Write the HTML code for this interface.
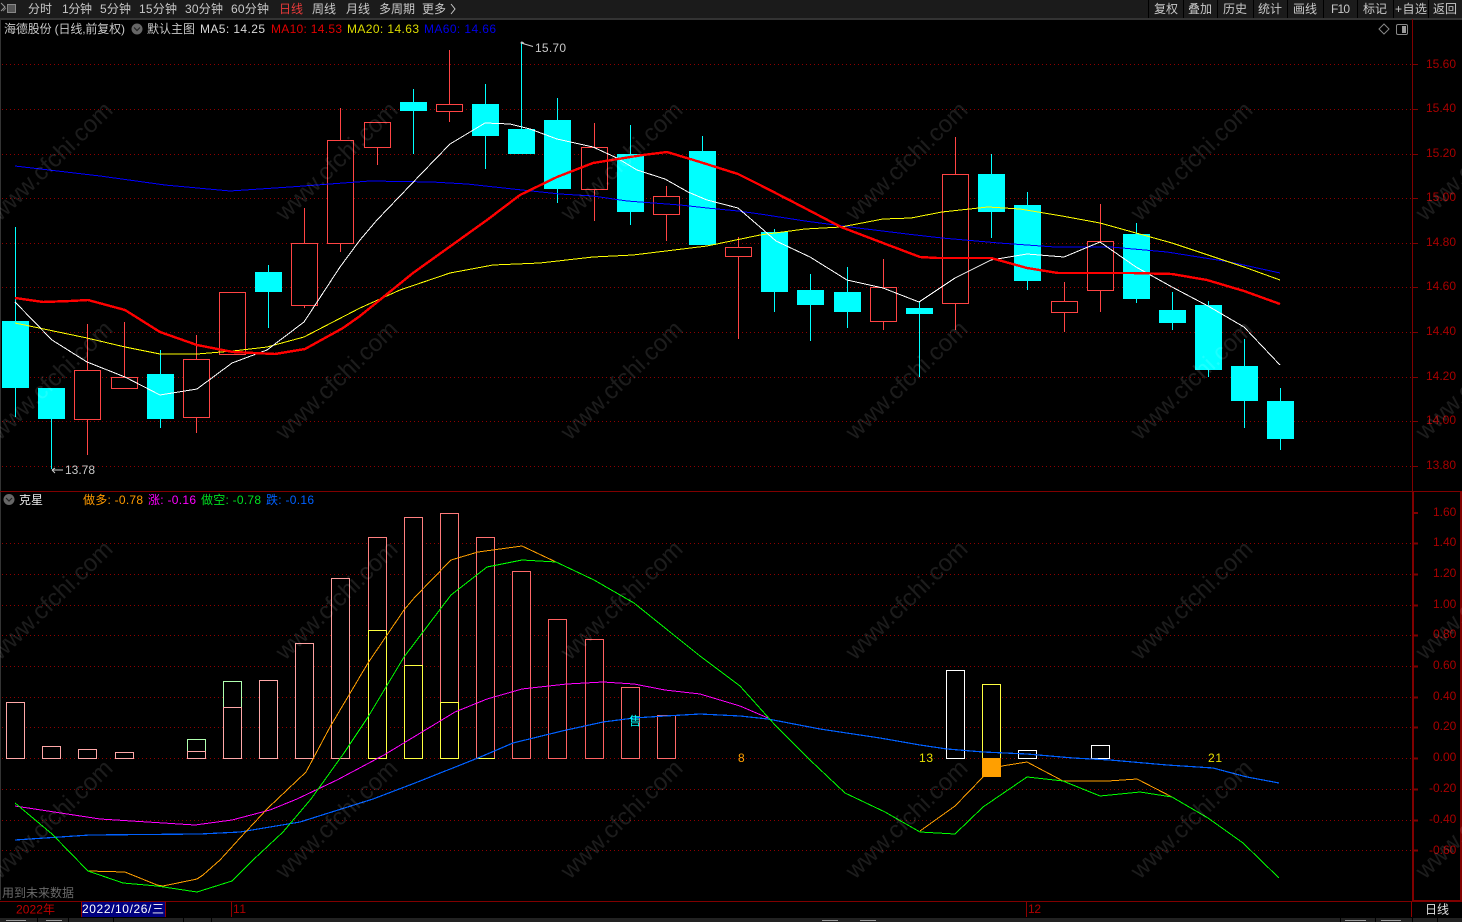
<!DOCTYPE html>
<html lang="zh"><head><meta charset="utf-8"><title>海德股份</title>
<style>
html,body{margin:0;padding:0;background:#000;width:1462px;height:922px;overflow:hidden}
svg{display:block}
text{font-family:"Liberation Sans","Noto Sans CJK SC",sans-serif;font-size:12px;white-space:pre}
.t{fill:#c8c8c8}
.ax{fill:#a80000;font-size:12.5px}
.wm text{font-size:24px;fill:rgba(255,255,255,.11)}
</style></head><body>
<svg width="1462" height="922" viewBox="0 0 1462 922" xmlns="http://www.w3.org/2000/svg">
<rect width="1462" height="922" fill="#000"/>

<!-- toolbar -->
<rect x="0" y="0" width="1462" height="18" fill="#1b1b1b"/>
<rect x="0" y="18" width="1462" height="2" fill="#333"/>
<g shape-rendering="crispEdges">
<path d="M1148.5 0V18M1183.5 0V18M1217.5 0V18M1253.5 0V18M1287.5 0V18M1323.5 0V18M1357.5 0V18M1393.5 0V18M1428.5 0V18" stroke="#000" fill="none"/>
</g>
<path d="M1 3l4 4-4 4" stroke="#999" fill="none"/><path d="M3 11l3-3" stroke="#777"/>
<rect x="7.5" y="4.5" width="8" height="8" fill="#555" stroke="#888"/>
<g class="t">
<text x="28" y="13" textLength="24">分时</text>
<text x="62" y="13" textLength="30">1分钟</text>
<text x="100" y="13" textLength="31">5分钟</text>
<text x="139" y="13" textLength="38">15分钟</text>
<text x="185" y="13" textLength="38">30分钟</text>
<text x="231" y="13" textLength="38">60分钟</text>
<text x="279" y="13" textLength="24" style="fill:#e83a3a">日线</text>
<text x="312" y="13" textLength="24">周线</text>
<text x="346" y="13" textLength="24">月线</text>
<text x="379" y="13" textLength="36">多周期</text>
<text x="422" y="13" textLength="24">更多</text>
<text x="1154" y="13" textLength="24">复权</text>
<text x="1188" y="13" textLength="24">叠加</text>
<text x="1223" y="13" textLength="24">历史</text>
<text x="1258" y="13" textLength="24">统计</text>
<text x="1293" y="13" textLength="24">画线</text>
<text x="1331" y="13" textLength="19">F10</text>
<text x="1363" y="13" textLength="24">标记</text>
<text x="1395" y="13" textLength="32">+自选</text>
<text x="1433" y="13" textLength="24">返回</text>
</g>
<path d="M451 4l4 5-4 5" stroke="#c8c8c8" fill="none"/>

<!-- left edge -->
<rect x="0" y="20" width="1" height="880" fill="#333"/>

<!-- grids -->
<g stroke="#8f0000" stroke-dasharray="1 3" shape-rendering="crispEdges" fill="none">
<path d="M2 64.5H1412M2 109.5H1412M2 154.5H1412M2 198.5H1412M2 243.5H1412M2 287.5H1412M2 332.5H1412M2 377.5H1412M2 421.5H1412M2 466.5H1412"/>
<path d="M2 543.5H1412M2 574.5H1412M2 605.5H1412M2 635.5H1412M2 666.5H1412M2 697.5H1412M2 727.5H1412M2 758.5H1412M2 789.5H1412M2 820.5H1412M2 850.5H1412"/>
</g>

<!-- main candles -->
<g shape-rendering="crispEdges" fill="none">
<path stroke="#00ffff" d="M15.5 227V321M15.5 388V417M51.5 419V469M160.5 350V374M160.5 419V428M268.5 265V272M268.5 292V328M413.5 89V102M413.5 111V154M485.5 84V104M485.5 136V169M521.5 42V129M557.5 98V120M557.5 189V203M630.5 125V154M630.5 212V225M702.5 136V151M774.5 229V232M774.5 292V312M810.5 274V290M810.5 305V341M847.5 267V292M847.5 312V328M919.5 302V308M919.5 314V377M991.5 154V174M991.5 212V238M1027.5 192V205M1027.5 281V290M1136.5 223V234M1136.5 299V303M1172.5 292V310M1172.5 323V330M1208.5 301V305M1208.5 370V377M1244.5 339V366M1244.5 401V428M1280.5 388V401M1280.5 439V450"/>
<path stroke="#ff4444" d="M87.5 324V370M87.5 420V455M124.5 322V377M196.5 335V359M196.5 418V433M304.5 208V243M304.5 306V308M340.5 108V140M340.5 244V252M377.5 147V165M449.5 50V104M449.5 112V122M594.5 123V147M594.5 190V221M666.5 186V196M666.5 215V241M738.5 237V247M738.5 257V339M883.5 259V287M883.5 322V330M955.5 137V174M955.5 304V330M1064.5 282V301M1064.5 313V332M1100.5 204V241M1100.5 291V312"/>
<g fill="#00ffff">
<rect x="2" y="321" width="27" height="67"/><rect x="38" y="388" width="27" height="31"/><rect x="147" y="374" width="27" height="45"/><rect x="255" y="272" width="27" height="20"/><rect x="400" y="102" width="27" height="9"/><rect x="472" y="104" width="27" height="32"/><rect x="508" y="129" width="27" height="25"/><rect x="544" y="120" width="27" height="69"/><rect x="617" y="154" width="27" height="58"/><rect x="689" y="151" width="27" height="94"/><rect x="761" y="232" width="27" height="60"/><rect x="797" y="290" width="27" height="15"/><rect x="834" y="292" width="27" height="20"/><rect x="906" y="308" width="27" height="6"/><rect x="978" y="174" width="27" height="38"/><rect x="1014" y="205" width="27" height="76"/><rect x="1123" y="234" width="27" height="65"/><rect x="1159" y="310" width="27" height="13"/><rect x="1195" y="305" width="27" height="65"/><rect x="1231" y="366" width="27" height="35"/><rect x="1267" y="401" width="27" height="38"/>
</g>
<g fill="#000" stroke="#ff4444">
<rect x="74.5" y="370.5" width="26" height="49"/><rect x="111.5" y="377.5" width="26" height="11"/><rect x="183.5" y="359.5" width="26" height="58"/><rect x="219.5" y="292.5" width="26" height="62"/><rect x="291.5" y="243.5" width="26" height="62"/><rect x="327.5" y="140.5" width="26" height="103"/><rect x="364.5" y="122.5" width="26" height="25"/><rect x="436.5" y="104.5" width="26" height="7"/><rect x="581.5" y="147.5" width="26" height="42"/><rect x="653.5" y="196.5" width="26" height="18"/><rect x="725.5" y="247.5" width="26" height="9"/><rect x="870.5" y="287.5" width="26" height="34"/><rect x="942.5" y="174.5" width="26" height="129"/><rect x="1051.5" y="301.5" width="26" height="11"/><rect x="1087.5" y="241.5" width="26" height="49"/>
</g>
</g>

<!-- main MAs -->
<g fill="none" shape-rendering="crispEdges">
<polyline stroke="#0000ff" points="15,166 100,176 165,185 230,191 290,187 370,181 432,182 467,184 522,190 560,194 593,196 627,201 680,205 707,208 738,211 760,214 805,221 858,228 907,234 942,238 999,243 1055,247 1111,247 1167,252 1230,262 1280,273"/>
<polyline stroke="#ffff00" points="15,323 87,338 125,347 160,354 197,354 233,351 267,347 304,337 360,308 400,290 450,273 493,265 540,263 593,257 633,255 707,246 760,235 805,229 841,227 883,219 911,218 942,212 988,207 1020,209 1062,216 1100,223 1136,233 1172,243 1208,255 1244,267 1280,280"/>
<polyline stroke="#ffffff" points="15,302 52,340 87,362 125,377 160,395 197,389 232,363 267,350 304,322 340,267 360,240 377,220 422,173 450,144 485,123 510,124 530,129 557,139 593,147 617,158 637,170 665,179 688,192 707,200 738,208 760,227 776,241 810,257 847,280 883,288 919,302 955,278 991,260 1027,254 1064,257 1100,242 1136,267 1172,287 1208,306 1244,327 1280,365"/>
<polyline stroke="#ff0000" stroke-width="2.4" points="15,298 43,302 70,301 88,300 125,310 160,332 197,345 233,352 275,354 305,349 343,328 360,316 413,273 487,220 520,195 557,177 593,163 643,155 667,152 700,162 738,174 760,185 795,203 841,227 883,243 920,257 937,258 991,258 1027,268 1058,273 1132,273 1172,274 1207,280 1244,291 1280,304"/>
</g>

<!-- main labels -->
<g class="t">
<text x="4" y="33" textLength="121">海德股份 (日线,前复权)</text>
<text x="147" y="33" textLength="48">默认主图</text>
<text x="200" y="33" textLength="65" style="fill:#d8d8d8">MA5: 14.25</text>
<text x="271" y="33" textLength="71" style="fill:#e00000">MA10: 14.53</text>
<text x="347" y="33" textLength="72" style="fill:#dcdc00">MA20: 14.63</text>
<text x="424" y="33" textLength="72" style="fill:#0000e8">MA60: 14.66</text>
<text x="535" y="52" textLength="31">15.70</text>
<text x="65" y="474" textLength="30">13.78</text>
</g>
<circle cx="137" cy="29" r="5.5" fill="#666"/><path d="M134 27.5l3 3 3-3" stroke="#222" fill="none" stroke-width="1.2"/>
<path d="M524 43.5q-3-3-3 0M521 43l12 3.5" stroke="#ccc" fill="none"/>
<path d="M52 470H63M52 470l3-2M52 470l3 3" stroke="#ccc" fill="none"/>
<path d="M1384 24l5 5-5 5-5-5z" fill="none" stroke="#888"/>
<rect x="1396.5" y="24.5" width="11" height="10" rx="1.5" fill="none" stroke="#888"/><rect x="1402" y="26" width="4" height="7" fill="#999"/>

<!-- axes -->
<g shape-rendering="crispEdges" fill="none">
<path stroke="#800000" d="M1412.5 19V491M1412 64.5h6M1412 109.5h6M1412 154.5h6M1412 198.5h6M1412 243.5h6M1412 287.5h6M1412 332.5h6M1412 377.5h6M1412 421.5h6M1412 466.5h6"/>
<path stroke="#800000" d="M0 491.5H1462M0 901.5H1412"/>
<path stroke="#800000" stroke-width="2" d="M1413 492V901H1461V492M1412 513h6M1412 543.5h6M1412 574.5h6M1412 605.5h6M1412 635.5h6M1412 666.5h6M1412 697.5h6M1412 727.5h6M1412 758.5h6M1412 789.5h6M1412 820.5h6M1412 850.5h6"/>
</g>
<g class="ax">
<text x="1426" y="68">15.60</text><text x="1426" y="112">15.40</text><text x="1426" y="157">15.20</text><text x="1426" y="201">15.00</text><text x="1426" y="246">14.80</text><text x="1426" y="290">14.60</text><text x="1426" y="335">14.40</text><text x="1426" y="380">14.20</text><text x="1426" y="424">14.00</text><text x="1426" y="469">13.80</text>
<text x="1433" y="516">1.60</text><text x="1433" y="546">1.40</text><text x="1433" y="577">1.20</text><text x="1433" y="608">1.00</text><text x="1433" y="638">0.80</text><text x="1433" y="669">0.60</text><text x="1433" y="700">0.40</text><text x="1433" y="730">0.20</text><text x="1433" y="761">0.00</text><text x="1429" y="792">-0.20</text><text x="1429" y="823">-0.40</text><text x="1429" y="854">-0.60</text>
</g>

<!-- lower header -->
<circle cx="9" cy="499.5" r="5.5" fill="#666"/><path d="M6 498l3 3 3-3" stroke="#222" fill="none" stroke-width="1.2"/>
<text x="19" y="504" textLength="24" fill="#e8e8e8">克星</text>
<text x="83" y="504" textLength="60" fill="#ff9a00">做多: -0.78</text>
<text x="148" y="504" textLength="48" fill="#ff00ff">涨: -0.16</text>
<text x="201" y="504" textLength="60" fill="#00e020">做空: -0.78</text>
<text x="266" y="504" textLength="48" fill="#0060ff">跌: -0.16</text>

<!-- lower bars -->
<g shape-rendering="crispEdges" fill="#000">
<g stroke="#ffa8a8"><rect x="6.5" y="702.5" width="18" height="56"/><rect x="42.5" y="746.5" width="18" height="12"/><rect x="78.5" y="749.5" width="18" height="9"/><rect x="115.5" y="752.5" width="18" height="6"/></g>
<rect x="187.5" y="739.5" width="18" height="19" stroke="#b0ffb0"/><rect x="187.5" y="751.5" width="18" height="7" stroke="#ffa8a8"/>
<rect x="223.5" y="681.5" width="18" height="77" stroke="#b0ffb0"/><rect x="223.5" y="707.5" width="18" height="51" stroke="#ffa8a8"/>
<rect x="259.5" y="680.5" width="18" height="78" stroke="#ffa8a8"/>
<rect x="295.5" y="643.5" width="18" height="115" stroke="#ffa0a0"/>
<rect x="331.5" y="578.5" width="18" height="180" stroke="#ff9c9c"/>
<rect x="368.5" y="537.5" width="18" height="221" stroke="#ff8080"/><rect x="368.5" y="630.5" width="18" height="128" stroke="#ffff40"/>
<rect x="404.5" y="517.5" width="18" height="241" stroke="#ff8080"/><rect x="404.5" y="665.5" width="18" height="93" stroke="#ffff40"/>
<rect x="440.5" y="513.5" width="18" height="245" stroke="#ff7a7a"/><rect x="440.5" y="702.5" width="18" height="56" stroke="#ffff40"/>
<rect x="476.5" y="537.5" width="18" height="221" stroke="#ff7070"/><path d="M476 758.5H495" stroke="#ffff40"/>
<rect x="512.5" y="571.5" width="18" height="187" stroke="#ff6868"/>
<rect x="548.5" y="619.5" width="18" height="139" stroke="#ff6060"/>
<rect x="585.5" y="639.5" width="18" height="119" stroke="#ff6060"/>
<rect x="621.5" y="687.5" width="18" height="71" stroke="#ff6868"/>
<rect x="657.5" y="715.5" width="18" height="43" stroke="#ff6868"/>
<rect x="946.5" y="670.5" width="18" height="88" stroke="#fff"/>
<rect x="982.5" y="684.5" width="18" height="74" stroke="#ffff40"/>
<rect x="982" y="758" width="19" height="19" fill="#ff9f00"/>
<rect x="1018.5" y="750.5" width="18" height="8" stroke="#fff"/>
<rect x="1091.5" y="745.5" width="18" height="13" stroke="#fff"/>
</g>

<!-- lower lines -->
<g fill="none" shape-rendering="crispEdges">
<polyline stroke="#ff00ff" points="15,806 100,819 195,825 232,820 270,810 297,799 337,780 384,755 422,732 455,712 487,699 522,689 567,684 603,682 634,684 665,690 700,694 740,706 768,718"/>
<polyline stroke="#0060ff" stroke-width="1.2" points="15,840 90,835 200,834 240,832 300,822 373,799 415,783 478,758 513,743 562,731 603,722 634,718 665,716 700,714 740,716 768,719 820,729 880,738 920,745 947,749 983,752 1027,754 1073,758 1110,760 1167,765 1213,768 1247,777 1279,783"/>
<polyline stroke="#ff9f00" points="88,871 125,872 157,885 163,886 197,879 203,875 220,860 240,838 268,808 306,772 330,727 368,663 404,610 415,597 451,560 478,552 522,546 556,562"/>
<polyline stroke="#ff9f00" points="920,831 955,806 983,777 1002,766 1027,762 1063,781 1108,781 1137,779 1172,797"/>
<polyline stroke="#00ff00" points="15,803 52,834 88,871 123,883 157,886 197,892 232,881 253,860 283,832 311,799 344,753 368,717 404,657 451,595 487,567 522,560 556,562 594,580 634,603 670,632 700,656 740,686 775,725 810,760 845,793 885,812 920,832 955,834 983,807 1027,777 1063,781 1100,796 1140,792 1172,797 1208,818 1243,843 1279,878"/>
</g>
<text x="629" y="725" fill="#00ffff" font-size="12">售</text>
<text x="738" y="762" fill="#ffa000">8</text>
<text x="919" y="762" fill="#e8e000" textLength="14">13</text>
<text x="1208" y="762" fill="#e8e000" textLength="14">21</text>
<text x="2" y="897" textLength="72" fill="#6a6a6a">用到未来数据</text>

<!-- date axis -->
<rect x="81" y="902" width="85" height="15" fill="#000080"/>
<g shape-rendering="crispEdges"><path d="M81.5 902V917M165.5 902V917M231.5 902V917M1026.5 902V917M1411.5 902V917" stroke="#900000"/></g>
<text x="16" y="913.5" textLength="39" fill="#c00000">2022年</text>
<text x="82" y="913" textLength="82" fill="#fff">2022/10/26/三</text>
<text x="233" y="913" textLength="13" fill="#b00000">11</text>
<text x="1028" y="913" textLength="13" fill="#b00000">12</text>
<text x="1425" y="913.5" textLength="24" fill="#e0e0e0">日线</text>

<!-- bottom strip -->
<rect x="0" y="918" width="1462" height="4" fill="#222"/>
<g shape-rendering="crispEdges">
<path d="M37.5 918V922M68.5 918V922M113.5 918V922M183.5 918V922M211.5 918V922M1340.5 918V922M1375.5 918V922M1412.5 918V922M1437.5 918V922" stroke="#000"/>
<path d="M6 920.5H26M46 920.5H62M822 920.5H838M860 920.5H876M1345 920.5H1366M1381 920.5H1401" stroke="#999"/>
</g>

<!-- watermarks -->
<g class="wm">
<text transform="translate(0 222) rotate(-44)">www.cfchi.com</text><text transform="translate(285 222) rotate(-44)">www.cfchi.com</text><text transform="translate(570 222) rotate(-44)">www.cfchi.com</text><text transform="translate(855 222) rotate(-44)">www.cfchi.com</text><text transform="translate(1140 222) rotate(-44)">www.cfchi.com</text><text transform="translate(1425 222) rotate(-44)">www.cfchi.com</text>
<text transform="translate(0 441) rotate(-44)">www.cfchi.com</text><text transform="translate(285 441) rotate(-44)">www.cfchi.com</text><text transform="translate(570 441) rotate(-44)">www.cfchi.com</text><text transform="translate(855 441) rotate(-44)">www.cfchi.com</text><text transform="translate(1140 441) rotate(-44)">www.cfchi.com</text><text transform="translate(1425 441) rotate(-44)">www.cfchi.com</text>
<text transform="translate(0 661) rotate(-44)">www.cfchi.com</text><text transform="translate(285 661) rotate(-44)">www.cfchi.com</text><text transform="translate(570 661) rotate(-44)">www.cfchi.com</text><text transform="translate(855 661) rotate(-44)">www.cfchi.com</text><text transform="translate(1140 661) rotate(-44)">www.cfchi.com</text><text transform="translate(1425 661) rotate(-44)">www.cfchi.com</text>
<text transform="translate(0 880) rotate(-44)">www.cfchi.com</text><text transform="translate(285 880) rotate(-44)">www.cfchi.com</text><text transform="translate(570 880) rotate(-44)">www.cfchi.com</text><text transform="translate(855 880) rotate(-44)">www.cfchi.com</text><text transform="translate(1140 880) rotate(-44)">www.cfchi.com</text><text transform="translate(1425 880) rotate(-44)">www.cfchi.com</text>
</g>
</svg>
</body></html>
